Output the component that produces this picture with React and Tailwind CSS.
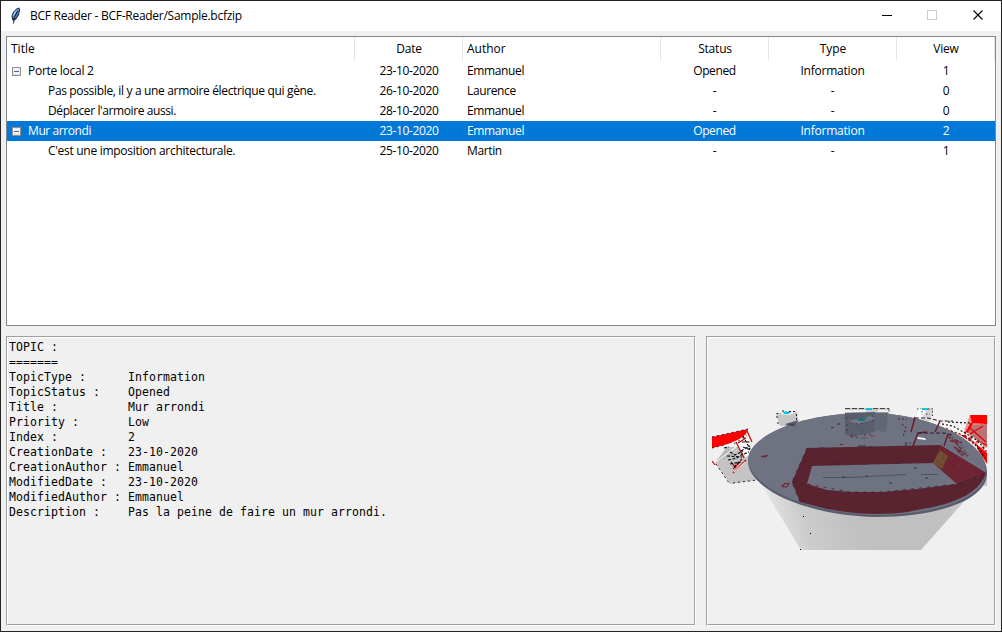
const COLUMNS = "grid grid-cols-[348px_108px_198px_108px_128px_98px]";

const HEADINGS = [
  { label: "Title", cls: "pl-1 tracking-[0px]" },
  { label: "Date", cls: "pl-px text-center" },
  { label: "Author", cls: "pl-1 tracking-[0px]" },
  { label: "Status", cls: "pl-px text-center" },
  { label: "Type", cls: "pl-px text-center tracking-[0px]" },
  { label: "View", cls: "pl-px text-center" },
];

const ROWS = [
  { title: "Porte local 2", track: "tracking-[-0.27px]", date: "23-10-2020", author: "Emmanuel", status: "Opened", type: "Information", view: "1", parent: true },
  { title: "Pas possible, il y a une armoire électrique qui gène.", track: "tracking-[-0.34px]", date: "26-10-2020", author: "Laurence", status: "-", type: "-", view: "0" },
  { title: "Déplacer l'armoire aussi.", track: "tracking-[-0.4px]", date: "28-10-2020", author: "Emmanuel", status: "-", type: "-", view: "0" },
  { title: "Mur arrondi", track: "tracking-[-0.41px]", date: "23-10-2020", author: "Emmanuel", status: "Opened", type: "Information", view: "2", parent: true, selected: true },
  { title: "C'est une imposition architecturale.", track: "tracking-[-0.29px]", date: "25-10-2020", author: "Martin", status: "-", type: "-", view: "1" },
];

const DETAILS = [
  "TOPIC :",
  "=======",
  "TopicType :      Information",
  "TopicStatus :    Opened",
  "Title :          Mur arrondi",
  "Priority :       Low",
  "Index :          2",
  "CreationDate :   23-10-2020",
  "CreationAuthor : Emmanuel",
  "ModifiedDate :   23-10-2020",
  "ModifiedAuthor : Emmanuel",
  "Description :    Pas la peine de faire un mur arrondi.",
];

function Feather() {
  return (
    <svg width="12" height="18" viewBox="0 0 12 18">
      <path d="M3 14 L2 12 L1.500 9 L3 5 L6.500 1.500 L9.5 0.5 L10 3 L9 8 L6 12.500 L4 13.500 Z" fill="#1b2b45" />
      <path d="M3 11.500 L2.500 8.5 L4.500 4.5 L8 1.500 L9 2 L8.300 7 L5.5 11.500 Z" fill="#4a86cc" />
      <path d="M3.500 9 L8 2 L5 4.500 L3 8 Z" fill="#b5d5f5" />
      <path d="M7.5 4 L4.300 11 L3.5 16.5" stroke="#111" strokeWidth="0.900" fill="none" />
    </svg>
  );
}

function TitleBar() {
  return (
    <header className="flex h-[30px] shrink-0 items-center bg-white">
      <div className="flex w-[29px] justify-center pl-px">
        <Feather />
      </div>
      <span className="flex-1 tracking-[-0.27px]">BCF Reader - BCF-Reader/Sample.bcfzip</span>
      <svg width="120" height="30" viewBox="0 0 120 30" shapeRendering="crispEdges" fill="none">
        <path d="M1 14.5H11" stroke="#000" />
        <rect x="46.500" y="9.500" width="9" height="9" stroke="#ccc" />
        <path d="M92.500 9.500L101.500 18.500M101.500 9.500L92.500 18.500" stroke="#000" strokeWidth="1.1" shapeRendering="auto" />
      </svg>
    </header>
  );
}

function Toggle() {
  return (
    <svg className="mt-[6px] mr-[7px] shrink-0" width="9" height="9" viewBox="0 0 9 9" shapeRendering="crispEdges">
      <rect x="0.500" y="0.500" width="8" height="8" fill="#f3f3f3" stroke="#919191" />
      <path d="M1 7.500H8" stroke="#dedede" />
      <path d="M2 4.500H7" stroke="#4b63a7" />
    </svg>
  );
}

function TopicTree() {
  return (
    <section className="h-[290px] shrink-0 border border-[#828790] bg-white">
      <div className={COLUMNS + " h-6 leading-[23px] tracking-[-0.2px]"}>
        {HEADINGS.map((h) => (
          <div key={h.label} className={"border-r border-[#e5e5e5] " + h.cls}>{h.label}</div>
        ))}
      </div>
      {ROWS.map((r) => (
        <div
          key={r.title}
          className={COLUMNS + " h-5 leading-[19px] tracking-[-0.37px] " + (r.selected ? "bg-[#0078d7] text-white" : "")}
        >
          <div className={"flex items-start whitespace-nowrap " + (r.parent ? "pl-[5px]" : "pl-[41px]")}>
            {r.parent && <Toggle />}
            <span className={r.track}>{r.title}</span>
          </div>
          <div className="text-center">{r.date}</div>
          <div className="pl-1">{r.author}</div>
          <div className="pr-px text-center">{r.status}</div>
          <div className="pr-px text-center tracking-[-0.22px]">{r.type}</div>
          <div className="text-center">{r.view}</div>
        </div>
      ))}
    </section>
  );
}

function Groove({ className, children }) {
  return (
    <div className={"border border-t-[#a0a0a0] border-l-[#a0a0a0] border-r-white border-b-white " + className}>
      <div className="h-full border border-t-white border-l-white border-r-[#a0a0a0] border-b-[#a0a0a0]">{children}</div>
    </div>
  );
}

function Snapshot() {
  return (
    <svg className="ml-1" width="276" height="150" viewBox="712 402 276 150">
      <defs>
        <linearGradient id="cone" x1="757" y1="490" x2="970" y2="430" gradientUnits="userSpaceOnUse">
          <stop offset="0" stopColor="#f0f0f0" />
          <stop offset="0.06" stopColor="#dedede" />
          <stop offset="0.16" stopColor="#cccccc" />
          <stop offset="0.4" stopColor="#c0c0c0" />
          <stop offset="0.75" stopColor="#c0c0c0" />
          <stop offset="1" stopColor="#cdcdcd" />
        </linearGradient>
      </defs>
      <path d="M756 476L801 550H921L968 497L987 476V486H982Z" fill="url(#cone)" />
      <path d="M978 473H987V485.500H979Z" fill="#c4c4c4" />

      <path d="M776 414L782 411L797 411.500L798 420L797 426H780Z" fill="#c6c6c6" />
      <path d="M776 414L782 411L797 411.500L790 415Z" fill="#eee" />
      <path d="M783 411.500H791L789 414H784Z" fill="#00c7d3" />
      <path d="M776.500 413.500H781M777 416V419M782 411H786M789 411.500H797M796.500 414V420M778 422V425" stroke="#111" strokeWidth="0.900" strokeDasharray="2 2" fill="none" />

      <path d="M715 463L727 447H739L749 458L757 480L730 484Z" fill="#c4c4c4" />
      <path d="M715 463L727 447L735 454L722 460Z" fill="#b8b8b8" />
      <path d="M716 462L736 447" stroke="#fff" />
      <path d="M712 437L748 429L746 434L736 442L712 448Z" fill="#f00" />
      <path d="M724 446L744 437L750 447L746 458L737 444Z" fill="#fff" />
      <path d="M736 442L744 458M747 431L752 442M738 443L746 438M733 473L746 460M712 461L715 465M733 469L740 462M731 462L736 468" stroke="#cf0000" strokeWidth="1.200" fill="none" />
      <path d="M734 472L745 462" stroke="#fff" />
      <path d="M743 436L750 449M742 442H751M743 447L751 450M741 451L750 446M744 454L749 452M724 448L729 447M727 456L742 457M728 460L737 458L744 453M730 464L741 462M734 467L742 459M730 452L735 455L743 451" stroke="#111" strokeWidth="1.200" strokeDasharray="3 1.500" fill="none" />
      <path d="M712 448L724 445M734 444L747 435M712 437L748 429M716 464L729 483M733 483L757 480" stroke="#111" strokeWidth="0.900" strokeDasharray="2 3" fill="none" />

      <path d="M916 417L919 408H933L931 419L927 423Z" fill="#d4d4d4" />
      <path d="M916 417L919 408L926 411L921 420Z" fill="#fff" />
      <path d="M922 409H928" stroke="#00c7d3" strokeWidth="2" />
      <path d="M917 409H921M928 409H933M932.500 411V418M922 411V415M926 414H930" stroke="#111" strokeWidth="0.800" strokeDasharray="1.500 2" fill="none" />

      <path d="M962 436L970 415H987V464L978 447Z" fill="#f58d8d" />
      <path d="M972 425L987 424V447L966 437Z" fill="#bd7373" />
      <path d="M970 415H987V424L972 423Z" fill="#f00" />
      <path d="M976 444L987 453V464L978 450Z" fill="#f00" />
      <path d="M972 423L964 437" stroke="#e60000" strokeWidth="2.400" />
      <path d="M970 428L986 442M983 426L965 437L987 445" stroke="#e60000" strokeWidth="1.200" fill="none" />
      <path d="M944 424L963 431L987 450M947 423L968 438" stroke="#fff" strokeWidth="3" strokeDasharray="5 3" fill="none" />
      <path d="M942 424L953 426L965 433L978 441L986 451M947 430L960 434L974 443L985 458M948 422L970 423" stroke="#111" strokeWidth="1.200" strokeDasharray="2 2" fill="none" />
      <path d="M946 428L965 437L976 446" stroke="#e01010" strokeDasharray="2 3" fill="none" />

      <path d="M748 461C748 436 800 413 868 413C930 413 987 441 987 473C987 501 935 517 876 517C800 515 748 487 748 461Z" fill="#575b6c" />
      <path d="M748 460C748 436 800 413 868 413C930 413 986 441 986 472C986 498 935 515 876 515C802 513 749 485 748 460Z" fill="#6e7281" />

      <path d="M845 408H889V414L875 413H845Z" fill="#cacaca" />
      <path d="M845 411H866M878 411H889" stroke="#fafafa" strokeWidth="1.500" />
      <path d="M845 408.500H889V414" stroke="#333" strokeWidth="0.900" strokeDasharray="5 2" fill="none" />
      <path d="M866 409H872" stroke="#00c7d3" strokeWidth="2" />

      <path d="M807 448L870 446.500L940 445L986 473C982 486 972 491 967 495C950 504 935 507 917 510C904 513 890 514 877 514C855 514 841 511 827 509L800 502L792 482Z" fill="#592430" />
      <path d="M940 445L986 473L957 484L933 463Z" fill="#6e2432" />
      <path d="M812 466L870 464.500L933 463L957 484L917 489L883 492L850 492L827 490L807 484Z" fill="#6e7281" />
      <path d="M940 450L948 456L942 469L933 463Z" fill="#705031" />
      <path d="M939 452V455M944 455L942 460M936 461L942 465" stroke="#4b3329" strokeDasharray="1 2" fill="none" />
      <path d="M807 448L792 482L800 502M806 460V476M792 482L807 484L850 492L883 492L957 484L986 473" stroke="#301e2b" strokeWidth="0.700" strokeDasharray="3 5" fill="none" />
      <path d="M823 477.500H850L906 474.500M921 474.500H938" stroke="#454a5b" strokeWidth="0.800" fill="none" />
      <path d="M819 448H825M833 464H840M861 464H867M895 463H901M842 477H845M866 476H868M914 468H917M889 483H892M925 478H928M952 465H954" stroke="#282b3b" strokeWidth="0.900" />

      <path d="M845 413L875 412V432L851 437L845 434Z" fill="#595d6c" />
      <path d="M875 412.500H888L886 432L874 430Z" fill="#626675" />
      <path d="M848 421L870 416L876 419L858 424Z" fill="#737785" />
      <path d="M857 419L862 417.500H867L864 421H859Z" fill="#21717b" />
      <path d="M847 424V434M851 437L862 438M864 435L872 434M856 424L866 423M872 421L876 418M846 417V420" stroke="#303442" strokeWidth="0.800" strokeDasharray="2 3" fill="none" />
      <path d="M850 435L856 436M863 438H868M870 436H875" stroke="#783040" strokeDasharray="3 1" />
      <path d="M785 424L799 420L795 425L788 426Z" fill="#565a6a" />
      <path d="M790 425H795M837 424H840M869 447H872M858 446H866M906 443V446" stroke="#2b2e3c" />

      <path d="M911 432L915 417M913 446L918 433L927 432M935 432L940 421M944 446L948 434" stroke="#6c1d2b" strokeWidth="1.500" fill="none" />
      <path d="M915 418H928L940 421H953M918 433H944L952 435" stroke="#2e2028" strokeWidth="1.100" strokeDasharray="4 2" fill="none" />
      <path d="M898 419H907M902 424L906 428L903 437M905 443H914" stroke="#4f2935" strokeWidth="1.100" strokeDasharray="2 2" fill="none" />
      <path d="M948 436L957 444L962 450M954 447L968 456M955 440L962 443M957 450L963 456M950 441L958 442" stroke="#792936" strokeWidth="1.600" strokeDasharray="4 1" fill="none" />
      <path d="M950 435L960 443L967 454M957 449L965 452M963 435L975 443L984 456" stroke="#292633" strokeWidth="0.900" strokeDasharray="1 2" fill="none" />
      <path d="M917 437L925 438L926 440L918 439Z" fill="#fff" />
      <path d="M761 456.500L768 455.500L765 457H762M831 427.500H834M840 444.500H843" stroke="#70202e" strokeWidth="1" fill="none" />
      <path d="M782 486L785 483.500H789L786.500 487H783Z" stroke="#732331" strokeWidth="1.100" fill="none" />
      <path d="M803 516.500H804M810 533.500H811M800 549.500H801" stroke="#000" />
    </svg>
  );
}

export default function App() {
  return (
    <div className="flex h-[632px] w-[1002px] flex-col overflow-hidden border border-[#242424] bg-[#f0f0f0] font-['Open_Sans','Noto_Sans',sans-serif] text-[12px] text-black">
      <TitleBar />
      <main className="flex flex-1 flex-col gap-[10px] p-[5px]">
        <TopicTree />
        <div className="flex h-[290px] gap-[10px]">
          <Groove className="w-[690px]">
            <pre className="pt-[2px] pl-px font-['DejaVu_Sans_Mono',monospace] text-[11.500px] leading-[15px] tracking-[0.077px]">{DETAILS.join("\n")}</pre>
          </Groove>
          <Groove className="w-[290px]">
            <div className="flex h-full pt-16">
              <Snapshot />
            </div>
          </Groove>
        </div>
      </main>
    </div>
  );
}
